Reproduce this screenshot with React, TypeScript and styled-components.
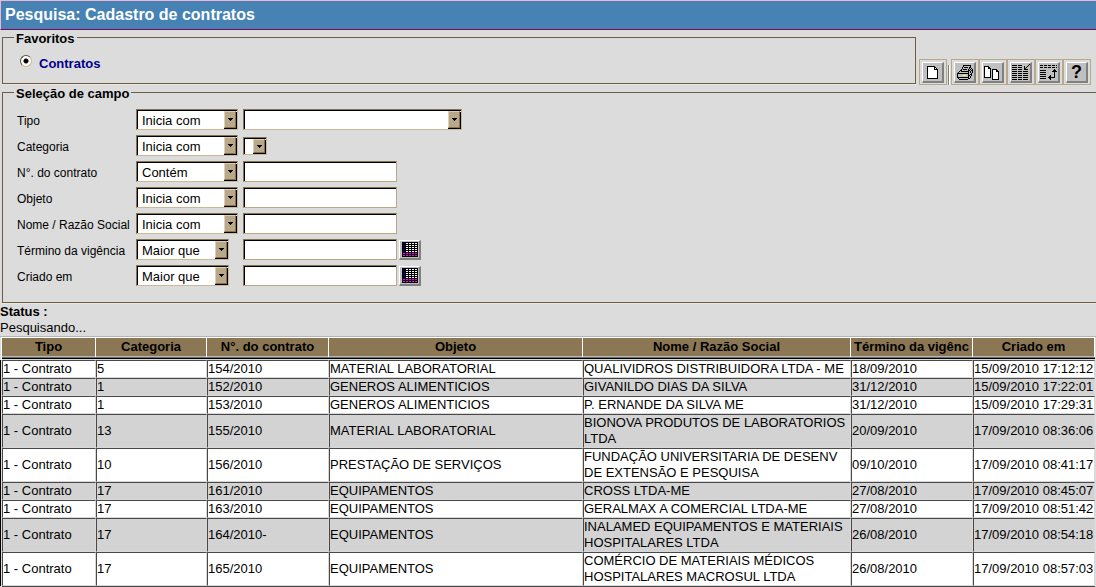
import React from 'react';
import styled, { createGlobalStyle } from 'styled-components';

const GlobalStyle = createGlobalStyle`
  * { box-sizing: border-box; }
  body {
    margin: 0;
    background: #dcdcdc;
    color: #000;
    font: 13px/16px "Liberation Sans", Arial, sans-serif;
  }
`;

const TitleBar = styled.header`
  border-top: 1px solid #f0b4d4;
  border-left: 1px solid #f0b4d4;
  border-bottom: 1px solid #7a0a55;
  background: #4682b4;
  padding: 0 4px;
`;

const Title = styled.h1`
  margin: 0;
  color: #fff;
  font-size: 16px;
  line-height: 28px;
`;

const TopArea = styled.div`
  display: flex;
  align-items: flex-end;
  padding-right: 5px;
`;

const Group = styled.fieldset<{ $open?: boolean }>`
  flex: 1;
  min-width: 0;
  margin: 0 0 1px 2px;
  padding: ${p => (p.$open ? '7px 0 13px 14px' : '10px 0 10px 17px')};
  border: 1px solid #6b5d47;
  border-right-width: ${p => (p.$open ? 0 : 1)}px;
  box-shadow: 0 1px 0 #efe8da;
`;

const Legend = styled.legend`
  padding: 2px 2px 0;
  font-weight: bold;
  line-height: 13px;
`;

const FieldLegend = styled(Legend)`
  margin-left: -3px;
`;

const FavoriteLegend = styled(Legend)`
  margin-left: -6px;
`;

const Favorite = styled.label`
  display: flex;
  align-items: flex-start;
  gap: 7px;
  color: #00008b;
  font-weight: bold;
  line-height: 18px;
`;

const Radio = styled.input`
  appearance: none;
  width: 12px;
  height: 12px;
  margin: 0;
  border: 1px solid;
  border-color: #5d5036 #c9b994 #c9b994 #5d5036;
  border-radius: 50%;
  background: #fff;
  &:checked {
    background: radial-gradient(circle, #000 2px, #fff 3px);
  }
`;

const Toolbar = styled.div`
  display: flex;
  margin-left: 3px;
`;

const ToolCell = styled.div`
  display: flex;
  align-items: center;
  justify-content: center;
  width: 28px;
  height: 26px;
  border: 1px solid #b9a98a;
`;

const Divider = styled.div`
  width: 2px;
  height: 20px;
  margin: 6px 1px 0;
  border-left: 1px solid #808080;
  border-right: 1px solid #fff;
`;

const ToolButton = styled.button`
  display: flex;
  align-items: center;
  justify-content: center;
  width: 22px;
  height: 21px;
  padding: 0;
  border: solid;
  border-width: 1px 2px 2px 1px;
  border-color: #fff #808080 #808080 #fff;
  background: #c0c0c0;
  color: #000;
  font: bold 18px/18px "Liberation Sans", Arial, sans-serif;
`;

const CalendarButton = styled(ToolButton)`
  height: 20px;
  margin-left: 2px;
`;

const Fields = styled.div`
  display: grid;
  grid-template-columns: 119px 107px 1fr;
  grid-auto-rows: 26px;
  align-items: center;
`;

const FieldLabel = styled.label`
  padding-top: 2px;
  font-size: 12px;
  white-space: nowrap;
`;

const Cell = styled.div`
  display: flex;
  align-items: center;
`;

const SelectBox = styled.div<{ $w: number; $h?: number }>`
  position: relative;
  width: ${p => p.$w}px;
  height: ${p => p.$h || 21}px;
  margin-bottom: ${p => (p.$h ? 0 : 1)}px;
`;

const Select = styled.select`
  appearance: none;
  display: block;
  width: 100%;
  height: 100%;
  padding: 3px 14px 0 5px;
  border: 1px solid;
  border-color: #857350 #c9b994 #c9b994 #857350;
  border-radius: 0;
  background: #fff;
  box-shadow: inset 1px 1px 0 #000;
  color: #000;
  font: inherit;
`;

const DropMark = styled.span`
  position: absolute;
  top: 2px;
  right: 2px;
  bottom: 2px;
  width: 12px;
  display: flex;
  align-items: center;
  justify-content: center;
  border: 1px solid;
  border-color: #ddd0b8 #857350 #857350 #ddd0b8;
  background: #b9a98a;
  box-shadow: 1px 1px 0 #000, 0 1px 0 #000;
  pointer-events: none;
`;

const TextInput = styled.input`
  width: 154px;
  height: 21px;
  margin: 0 0 1px;
  padding: 0 4px;
  border: 1px solid;
  border-color: #857350 #b9a98a #b9a98a #857350;
  background: #fff;
  box-shadow: inset 1px 1px 0 #000;
  font: inherit;
`;

const StatusText = styled.div`
  font-size: 13px;
`;

const Results = styled.div`
  padding: 0 1px 0 2px;
  overflow: hidden;
  border-top: 1px solid #b4b4b4;
`;

const Table = styled.table`
  width: 100%;
  table-layout: fixed;
  border-spacing: 0;
  border-bottom: 1px solid #484848;
`;

const Th = styled.th`
  height: 23px;
  padding: 0 1px 4px 0;
  border-top: 1px solid #fff;
  overflow: hidden;
  white-space: nowrap;
  line-height: 18px;
  background:
    linear-gradient(#fff, #fff) right top / 1px 19px no-repeat,
    linear-gradient(#8b7753 18px, #b8b8b8 18px 19px, #6c6c6c 19px 20px, #000 20px 21px, #d8d8d8 21px);
  &:first-child { box-shadow: -1px 0 0 #fff; }
`;

const Tr = styled.tr`
  background: #fff;
  &:nth-child(even) { background: #d3d3d3; }
`;

const Td = styled.td`
  padding: 0;
  border: 1px solid;
  border-color: #484848 #d8d8d8 #d8d8d8 #484848;
  &:first-child { box-shadow: -1px 0 0 #dcdcdc, -2px 0 0 #000; }
`;

const DocIcon = () => (
  <svg width="19" height="18" shapeRendering="crispEdges" aria-hidden="true">
    <path d="M4 3h8v1h1v1h1v1h1v10H4z" fill="#000" />
    <path d="M5 4h6v3h3v8H5z" fill="#fff" />
    <path d="M12 5h1v1h-1z" fill="#fff" />
  </svg>
);

const printerPixels = [
  '......########..',
  '......#......#..',
  '.....#.####.##..',
  '.....#......#.#.',
  '....#.####.#.#.#',
  '...##......##.##',
  '..#.########.#.#',
  '.#.........#.#.#',
  '############..#.',
  '#..........#.##.',
  '#.....yyy..##.#.',
  '#..........#.#..',
  '############.#..',
  '.#.........##...',
  '..#########.....',
];

const PrintIcon = () => (
  <svg width="19" height="18" shapeRendering="crispEdges" aria-hidden="true">
    {printerPixels.flatMap((line, y) =>
      [...line].map((p, x) =>
        p === '.' ? null : (
          <rect key={`${x}-${y}`} x={x + 2} y={y + 2} width="1" height="1" fill={p === 'y' ? '#ff0' : '#000'} />
        ),
      ),
    )}
  </svg>
);

const CopyIcon = () => (
  <svg width="19" height="18" shapeRendering="crispEdges" aria-hidden="true">
    <path d="M1 3h5v1h1v1h1v10H1z" fill="#000" />
    <path d="M2 4h3v2h2v8H2z" fill="#fff" />
    <path d="M9 6h5v1h1v1h1v9H9z" fill="#000" />
    <path d="M10 7h3v2h2v7h-5z" fill="#fff" />
  </svg>
);

const ColumnsIcon = () => (
  <svg width="19" height="18" shapeRendering="crispEdges" aria-hidden="true">
    {[2, 4, 6, 8, 10, 12, 14, 16].map(y => (
      <path key={y} d={`M1 ${y}h5v1H1zM7 ${y}h4v1H7z${y > 7 ? `M12 ${y}h5v1h-5z` : ''}`} />
    ))}
    <path d="M18 1h1v1h-1zM17 2h1v1h-1zM16 3h1v1h-1zM15 4h1v1h-1zM13 3h1v4h-1zM13 6h4v1h-4zM14 5h1v1h-1z" />
  </svg>
);

const InsertIcon = () => (
  <svg width="19" height="18" shapeRendering="crispEdges" aria-hidden="true">
    {[2, 4].map(y => (
      <path key={y} d={`M1 ${y}h3v1H1zM5 ${y}h3v1H5zM9 ${y}h3v1H9zM13 ${y}h3v1h-3zM17 ${y}h1v1h-1z`} />
    ))}
    {[7, 9, 11, 13, 15].map(y => (
      <path key={y} d={`M1 ${y}h6v1H1z`} />
    ))}
    <path d="M15 6h1v9h-1zM14 7h3v1h-3zM13 8h5v1h-5zM9 14h7v1H9zM10 13h1v3h-1zM11 12h1v5h-1z" />
  </svg>
);

const CalendarIcon = () => (
  <svg width="16" height="15" shapeRendering="crispEdges" aria-hidden="true">
    <path d="M0 0h16v15H0z" fill="#000" />
    {[1, 3, 5, 7, 9, 11, 13].map(y => (
      <g key={y}>
        <path d={`M1 ${y}h2v1H1z`} fill={y > 9 ? '#f0f' : '#000080'} />
        <path d={`M4 ${y}h2v1H4zM7 ${y}h2v1H7zM10 ${y}h2v1h-2zM13 ${y}h2v1h-2z`} fill={y > 9 ? '#f0f' : '#fff'} />
      </g>
    ))}
  </svg>
);

interface DropProps { id?: string; label: string; width: number; height?: number; value?: string }

const Drop = ({ id, label, width, height, value = '' }: DropProps) => (
  <SelectBox $w={width} $h={height}>
    <Select id={id} aria-label={label} defaultValue={value}>
      <option>{value}</option>
    </Select>
    <DropMark aria-hidden="true">
      <svg width="5" height="3" shapeRendering="crispEdges"><path d="M0 0h5v1H4v1H3v1H2V2H1V1H0z" /></svg>
    </DropMark>
  </SelectBox>
);

type Kind = 'wide' | 'small' | 'text' | 'date';

const fields: { id: string; label: string; op: string; kind: Kind }[] = [
  { id: 'tipo', label: 'Tipo', op: 'Inicia com', kind: 'wide' },
  { id: 'categoria', label: 'Categoria', op: 'Inicia com', kind: 'small' },
  { id: 'numero', label: 'N°. do contrato', op: 'Contém', kind: 'text' },
  { id: 'objeto', label: 'Objeto', op: 'Inicia com', kind: 'text' },
  { id: 'nome', label: 'Nome / Razão Social', op: 'Inicia com', kind: 'text' },
  { id: 'termino', label: 'Término da vigência', op: 'Maior que', kind: 'date' },
  { id: 'criado', label: 'Criado em', op: 'Maior que', kind: 'date' },
];

const columns: [string, number][] = [
  ['Tipo', 94],
  ['Categoria', 111],
  ['N°. do contrato', 122],
  ['Objeto', 254],
  ['Nome / Razão Social', 268],
  ['Término da vigênc', 122],
  ['Criado em', 122],
];

const rows = [
  ['5', '154/2010', 'MATERIAL LABORATORIAL', 'QUALIVIDROS DISTRIBUIDORA LTDA - ME', '18/09/2010', '15/09/2010 17:12:12'],
  ['1', '152/2010', 'GENEROS ALIMENTICIOS', 'GIVANILDO DIAS DA SILVA', '31/12/2010', '15/09/2010 17:22:01'],
  ['1', '153/2010', 'GENEROS ALIMENTICIOS', 'P. ERNANDE DA SILVA ME', '31/12/2010', '15/09/2010 17:29:31'],
  ['13', '155/2010', 'MATERIAL LABORATORIAL', 'BIONOVA PRODUTOS DE LABORATORIOS LTDA', '20/09/2010', '17/09/2010 08:36:06'],
  ['10', '156/2010', 'PRESTAÇÃO DE SERVIÇOS', 'FUNDAÇÃO UNIVERSITARIA DE DESENV DE EXTENSÃO E PESQUISA', '09/10/2010', '17/09/2010 08:41:17'],
  ['17', '161/2010', 'EQUIPAMENTOS', 'CROSS LTDA-ME', '27/08/2010', '17/09/2010 08:45:07'],
  ['17', '163/2010', 'EQUIPAMENTOS', 'GERALMAX A COMERCIAL LTDA-ME', '27/08/2010', '17/09/2010 08:51:42'],
  ['17', '164/2010-', 'EQUIPAMENTOS', 'INALAMED EQUIPAMENTOS E MATERIAIS HOSPITALARES LTDA', '26/08/2010', '17/09/2010 08:54:18'],
  ['17', '165/2010', 'EQUIPAMENTOS', 'COMÉRCIO DE MATERIAIS MÉDICOS HOSPITALARES MACROSUL LTDA', '26/08/2010', '17/09/2010 08:57:03'],
];

const tools: [string, React.ReactNode][] = [
  ['Imprimir', <PrintIcon />],
  ['Copiar', <CopyIcon />],
  ['Colunas', <ColumnsIcon />],
  ['Inserir', <InsertIcon />],
  ['Ajuda', '?'],
];

export default function App() {
  return (
    <>
      <GlobalStyle />
      <TitleBar>
        <Title>Pesquisa: Cadastro de contratos</Title>
      </TitleBar>
      <main>
        <TopArea>
          <Group>
            <FavoriteLegend>Favoritos</FavoriteLegend>
            <Favorite>
              <Radio type="radio" name="favorito" defaultChecked />
              Contratos
            </Favorite>
          </Group>
          <Toolbar>
            <ToolCell>
              <ToolButton type="button" aria-label="Novo"><DocIcon /></ToolButton>
            </ToolCell>
            <Divider />
            {tools.map(([name, icon]) => (
              <ToolCell key={name}>
                <ToolButton type="button" aria-label={name}>{icon}</ToolButton>
              </ToolCell>
            ))}
          </Toolbar>
        </TopArea>
        <Group $open>
          <FieldLegend>Seleção de campo</FieldLegend>
          <Fields>
            {fields.map(f => (
              <React.Fragment key={f.id}>
                <FieldLabel htmlFor={f.id}>{f.label}</FieldLabel>
                <Drop label={`Operador: ${f.label}`} width={f.kind === 'date' ? 93 : 102} value={f.op} />
                <Cell>
                  {f.kind === 'wide' && <Drop id={f.id} label={f.label} width={219} />}
                  {f.kind === 'small' && <Drop id={f.id} label={f.label} width={24} height={18} />}
                  {(f.kind === 'text' || f.kind === 'date') && <TextInput id={f.id} type="text" />}
                  {f.kind === 'date' && (
                    <CalendarButton type="button" aria-label="Calendário"><CalendarIcon /></CalendarButton>
                  )}
                </Cell>
              </React.Fragment>
            ))}
          </Fields>
        </Group>
        <section>
          <strong>Status :</strong>
          <StatusText>Pesquisando...</StatusText>
        </section>
        <Results>
          <Table>
            <colgroup>
              {columns.map(([name, w]) => <col key={name} width={w} />)}
            </colgroup>
            <thead>
              <tr>
                {columns.map(([name]) => <Th key={name} scope="col">{name}</Th>)}
              </tr>
            </thead>
            <tbody>
              {rows.map(r => (
                <Tr key={r[1]}>
                  <Td>1 - Contrato</Td>
                  {r.map((c, i) => <Td key={i}>{c}</Td>)}
                </Tr>
              ))}
            </tbody>
          </Table>
        </Results>
      </main>
    </>
  );
}
